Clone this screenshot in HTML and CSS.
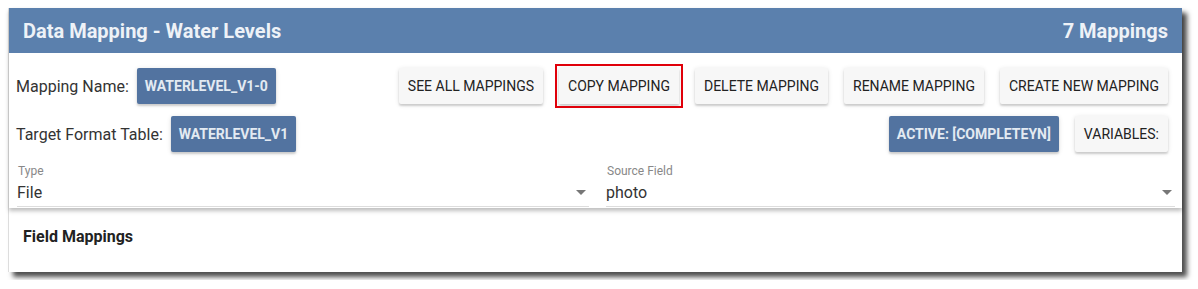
FILE: index.html
```html
<!DOCTYPE html>
<html lang="en">
<head>
  <meta charset="UTF-8">
  <meta name="viewport" content="width=device-width, initial-scale=1.0">
  <title>Data Mapping - Water Levels</title>
  <link rel="stylesheet" href="styles.css">
</head>
<body>

  <div class="panel">
    <div class="card card-top">
      <div class="header">
        <span>Data Mapping - Water Levels</span>
        <span>7 Mappings</span>
      </div>

      <div class="row">
        <div class="group">
          <span class="label">Mapping Name:</span>
          <button type="button" class="btn btn-blue">WATERLEVEL_V1-0</button>
        </div>
        <div class="group actions">
          <button type="button" class="btn">See all mappings</button>
          <button type="button" class="btn btn-marked">Copy mapping</button>
          <button type="button" class="btn">Delete mapping</button>
          <button type="button" class="btn">Rename mapping</button>
          <button type="button" class="btn">Create new mapping</button>
        </div>
      </div>

      <div class="row">
        <div class="group">
          <span class="label">Target Format Table:</span>
          <button type="button" class="btn btn-blue">WATERLEVEL_V1</button>
        </div>
        <div class="group actions">
          <button type="button" class="btn btn-blue">Active: [COMPLETEYN]</button>
          <button type="button" class="btn">Variables:</button>
        </div>
      </div>

      <div class="fields">
        <div class="field">
          <div class="field-label">Type</div>
          <div class="field-value">
            <span>File</span>
            <span class="arrow"></span>
          </div>
        </div>
        <div class="field">
          <div class="field-label">Source Field</div>
          <div class="field-value">
            <span>photo</span>
            <span class="arrow"></span>
          </div>
        </div>
      </div>
    </div>

    <div class="card card-bottom">
      <h3>Field Mappings</h3>
    </div>
  </div>

</body>
</html>
```

FILE: styles.css
```css
body {
  font-family: Roboto, "Liberation Sans", Arial, sans-serif;
  margin: 0;
  padding: 8px;
  background-color: #fff;
  color: #333;
}

.panel {
  width: 1174px;
  background-color: #fff;
  border-left: 1px solid #ddd;
  box-sizing: border-box;
  box-shadow: 5px 5px 5px rgba(0, 0, 0, 0.7);
}

.card-top {
  position: relative;
  z-index: 1;
  padding-bottom: 1px;
  box-shadow: 0 3px 4px rgba(0, 0, 0, 0.25);
}

.header {
  display: flex;
  justify-content: space-between;
  align-items: center;
  height: 45px;
  padding: 0 14px;
  background-color: #5b80ad;
  color: #eef2f7;
  font-size: 20px;
  font-weight: bold;
}

.row {
  display: flex;
  justify-content: space-between;
  align-items: center;
  padding: 0 14px 0 7px;
  margin-top: 15px;
}

.row + .row {
  margin-top: 12px;
}

.group {
  display: flex;
  align-items: center;
  gap: 8px;
}

.actions {
  gap: 16px;
}

.label {
  font-size: 16px;
  color: #333;
}

.btn {
  height: 36px;
  padding: 0 9px;
  font-family: inherit;
  font-size: 14px;
  font-weight: normal;
  text-transform: uppercase;
  color: #222;
  background-color: #f7f7f7;
  border: none;
  border-radius: 2px;
  box-shadow: 0 2px 2px rgba(0, 0, 0, 0.14), 0 1px 5px rgba(0, 0, 0, 0.12);
  cursor: pointer;
}

.btn-blue {
  padding: 0 8px;
  background-color: #5273a0;
  color: #e3eaf2;
  font-weight: bold;
}

.btn-marked {
  border-radius: 0;
  outline: 2px solid #e0000a;
  outline-offset: 2px;
}

.fields {
  display: grid;
  grid-template-columns: 572px 569px;
  gap: 17px;
  padding-left: 8px;
  margin-top: 12px;
}

.field-label {
  font-size: 12px;
  color: #888;
  padding-left: 1px;
}

.field-value {
  display: flex;
  justify-content: space-between;
  align-items: center;
  height: 28px;
  font-size: 16px;
  color: #333;
  border-bottom: 1px solid #ddd;
}

.arrow {
  width: 0;
  height: 0;
  margin-right: 3px;
  border-left: 5px solid transparent;
  border-right: 5px solid transparent;
  border-top: 5px solid #777;
}

.card-bottom {
  height: 64px;
  padding: 0 14px;
}

.card-bottom h3 {
  margin: 0;
  padding-top: 19px;
  font-size: 16px;
  font-weight: bold;
  color: #222;
}
```
